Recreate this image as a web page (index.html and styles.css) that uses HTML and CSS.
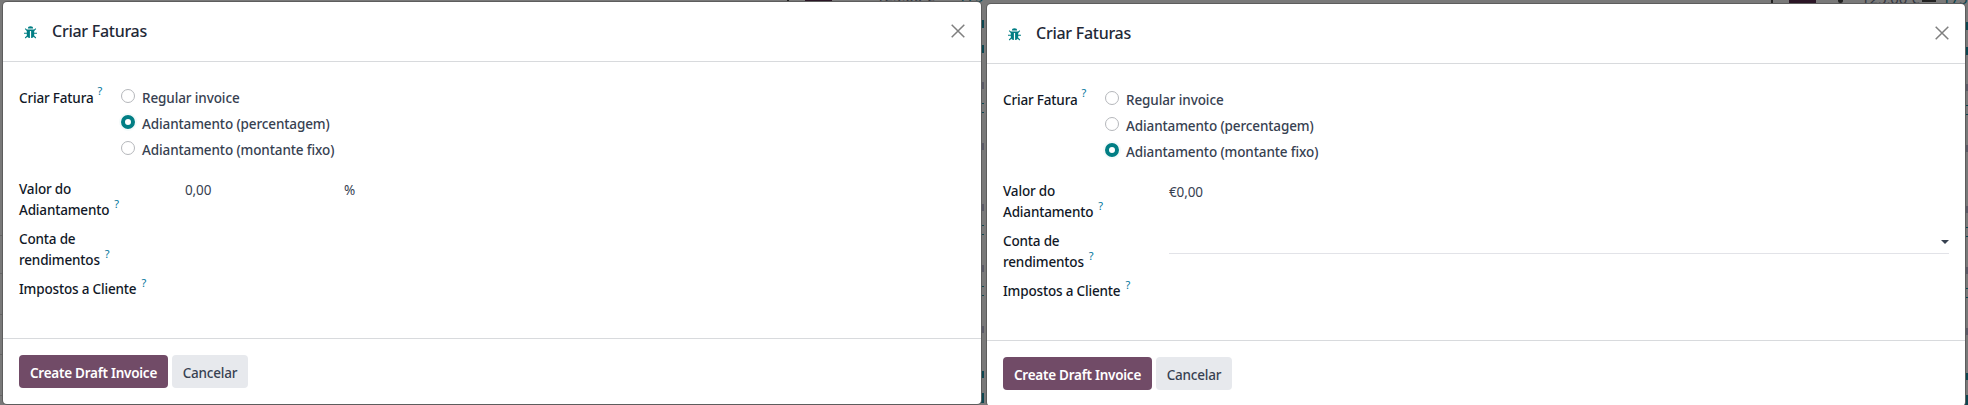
FILE: index.html
```html
<!DOCTYPE html>
<html lang="pt">
<head>
<meta charset="utf-8">
<title>Criar Faturas</title>
<link rel="stylesheet" href="styles.css">
</head>
<body>
<svg class="defs" width="0" height="0"><symbol id="bug" viewBox="0 0 13 13"><path d="M3.9 2.6a2.6 2.4 0 0 1 5.2 0z"/><path d="M2.8 3.4h7.4v5.8a2.8 2.8 0 0 1-3.1 2.9V5H5.9v7.1a2.8 2.8 0 0 1-3.1-2.9z"/><path d="M3.2 4.6 1.2 2.6M9.8 4.6l2-2M3.2 7.2H0M9.8 7.2H13M3.4 9.8l-2.2 2.2M9.6 9.8l2.2 2.2" fill="none" stroke="currentColor" stroke-width="1.1"/></symbol></svg>
<div class="backdrop">
  <span class="scrap teal" style="left:958px;top:-14px">175</span><span class="scrap" style="left:876px;top:-14px">125,00 €</span><i class="avatar" style="left:805px;height:2px"></i><i class="rule" style="left:787px"></i>
  <span class="scrap teal" style="left:1942px;top:-12px">175</span><span class="scrap" style="left:1861px;top:-12px">125,00 €</span><i class="avatar" style="left:1789px;height:4px"></i><i class="rule" style="left:1771px"></i><i class="arrow"></i><i class="dot"></i>
  <i class="line" style="top:235px"></i><i class="line" style="top:273px"></i><i class="line" style="top:314px"></i><i class="line" style="top:354px"></i><i class="line" style="top:395px"></i>
  <div class="sliver gap">
    <i class="teal" style="top:20px;height:8px"></i><i class="teal" style="top:45px;height:8px"></i><i style="top:82px"></i><i class="teal" style="top:103px"></i><i class="teal" style="top:112px"></i><i style="top:143px"></i><i style="top:204px"></i><i class="teal" style="top:225px"></i><i class="teal" style="top:234px"></i><i style="top:265px"></i><i class="teal" style="top:286px"></i><i class="teal" style="top:295px"></i><i style="top:326px"></i><i class="teal" style="top:371px;height:7px"></i><i class="teal" style="top:393px;height:10px"></i>
  </div>
  <div class="sliver edge">
    <i class="teal" style="top:22px;height:8px"></i><i class="teal" style="top:47px;height:8px"></i><i style="top:84px;height:7px"></i><i class="teal" style="top:105px"></i><i class="teal" style="top:114px"></i><i style="top:145px;height:7px"></i><i style="top:206px;height:7px"></i><i class="teal" style="top:227px"></i><i class="teal" style="top:236px"></i><i style="top:267px;height:7px"></i><i class="teal" style="top:288px"></i><i class="teal" style="top:297px"></i><i style="top:328px;height:7px"></i><i class="teal" style="top:373px;height:7px"></i><i class="teal" style="top:395px;height:10px"></i>
  </div>
</div>
<main class="screens">
<section class="dialog">
  <header><svg class="bug"><use href="#bug"/></svg><h1>Criar Faturas</h1><svg class="close" viewBox="0 0 14 14"><path d="m.7.7 12.6 12.6M13.3.7.7 13.3"/></svg></header>
  <div class="body">
    <div class="row choice"><label>Criar Fatura<sup>?</sup></label>
      <div class="options"><div class="option"><i></i><span>Regular invoice</span></div><div class="option on"><i></i><span>Adiantamento (percentagem)</span></div><div class="option"><i></i><span>Adiantamento (montante fixo)</span></div></div></div>
    <div class="row two"><label>Valor do<br>Adiantamento<sup>?</sup></label><div class="value percent"><span>0,00</span><span>%</span></div></div>
    <div class="row two"><label>Conta de<br>rendimentos<sup>?</sup></label></div>
    <div class="row"><label>Impostos a Cliente<sup>?</sup></label></div>
  </div>
  <footer><button class="primary">Create Draft Invoice</button><button>Cancelar</button></footer>
</section>
<section class="dialog second">
  <header><svg class="bug"><use href="#bug"/></svg><h1>Criar Faturas</h1><svg class="close" viewBox="0 0 14 14"><path d="m.7.7 12.6 12.6M13.3.7.7 13.3"/></svg></header>
  <div class="body">
    <div class="row choice"><label>Criar Fatura<sup>?</sup></label>
      <div class="options"><div class="option"><i></i><span>Regular invoice</span></div><div class="option"><i></i><span>Adiantamento (percentagem)</span></div><div class="option on"><i></i><span>Adiantamento (montante fixo)</span></div></div></div>
    <div class="row two"><label>Valor do<br>Adiantamento<sup>?</sup></label><div class="value"><span>€0,00</span></div></div>
    <div class="row two"><label>Conta de<br>rendimentos<sup>?</sup></label><div class="select"><i></i></div></div>
    <div class="row"><label>Impostos a Cliente<sup>?</sup></label></div>
  </div>
  <footer><button class="primary">Create Draft Invoice</button><button>Cancelar</button></footer>
</section>
</main>
</body>
</html>
```
FILE: styles.css
```css
*{box-sizing:border-box}
body{margin:0;width:1968px;height:405px;overflow:hidden;background:#797979;font-family:"Noto Sans","Open Sans",sans-serif;font-size:13.5px;letter-spacing:-.11px;line-height:21px;color:#374151}
.defs{position:absolute}
.backdrop{position:absolute;inset:0;overflow:hidden}
.backdrop>*{position:absolute}
.scrap{font-size:15px;color:#33363f;white-space:nowrap}
.scrap.teal{color:#08414a}
.avatar{width:27px;background:#2b1626}
.rule{width:2px;height:4px;background:#222}
.arrow{left:1922px;width:14px;height:2px;background:#222}
.dot{left:1838px;width:5px;height:3px;background:#222;border-radius:0 0 3px 3px}
.line{left:0;width:3px;height:1px;background:#666}
.sliver{top:0;width:3px;height:405px}
.gap{left:981px}
.edge{left:1965px}
.sliver i{position:absolute;left:0;width:3px;height:1px;background:#5a5a66}
.sliver .teal{background:#0c4650}
.gap i:not(.teal){height:7px;width:3px}
.screens{position:relative;display:flex;gap:6px;padding:2px 0 0 3px}
.dialog{width:978px;height:402px;background:#fff;border-radius:4px;box-shadow:0 0 0 1px #5d5d5d;flex:none}
.second{margin-top:2px}
header{height:60px;border-bottom:1px solid #d8dadd;display:flex;align-items:center;padding:0 16px 1px 21px}
.bug{width:13px;height:13px;color:#017e84;fill:currentColor;margin-top:2px}
h1{margin:0 auto 0 15px;font-weight:500;font-size:16px;letter-spacing:-.27px;color:#1f2937}
.close{width:14px;height:14px;stroke:#7f7f7f;stroke-width:1.5;fill:none}
.body{height:276px;padding:26px 16px 0}
.row{display:flex;height:29px}
.two{height:50px}
.choice{height:91px}
label{width:166px;color:#111827;font-weight:500;letter-spacing:-.17px;flex:none;white-space:nowrap}
.choice label{width:102px}
sup{font-size:11px;line-height:0;vertical-align:7px;color:#01759c;margin-left:5px;font-weight:400}
.choice sup{vertical-align:8px;margin-left:4px}
.option{height:26px;display:flex;align-items:flex-start;gap:7px;font-weight:500}
.option i{width:14px;height:14px;border:1px solid #b5b7bb;border-radius:50%;margin-top:1px}
.option.on i{border:4px solid #017e84;box-shadow:0 0 0 2px #f4fafa}
.value{display:flex;padding-top:1px}
.percent span:first-child{width:159px}
.select{flex:1;height:23px;border-bottom:1px solid #e2e3e8;display:flex;justify-content:flex-end;align-items:center}
.select i{border:4px solid transparent;border-top-color:#374151;border-bottom:0}
footer{height:66px;border-top:1px solid #d8dadd;display:flex;gap:4px;padding:16px}
button{height:33px;padding:2px 0 0;width:76px;border:0;border-radius:4px;font:500 13.5px "Noto Sans",sans-serif;letter-spacing:-.2px;background:#e7e9ed;color:#374151;white-space:nowrap}
.primary{width:149px;background:#714b67;color:#fff;font-weight:600;letter-spacing:-.25px}
```
